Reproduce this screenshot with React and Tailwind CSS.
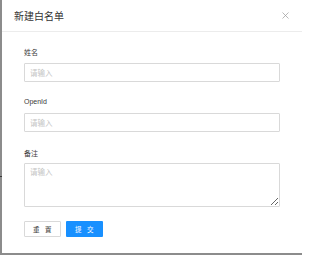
import React from "react";

export default function App() {
  const font = { fontFamily: '"Noto Sans CJK SC", "Noto Sans", "Liberation Sans", sans-serif' };
  return (
    <div className="w-[302px] h-[255px] bg-[#8c8c8c] relative overflow-hidden" style={font}>
      <div className="absolute left-0 top-[176px] w-[2px] h-[1px] bg-[#3a3a3a]" />
      <div className="ml-[2px] h-[253px] bg-white flex flex-col">
        <div className="h-[32px] border-b border-[#ececec] flex items-center justify-between pl-[12px] pr-[13px]">
          <span className="text-[10px] leading-none text-[#333333]">新建白名单</span>
          <svg width="7" height="7" viewBox="0 0 7 7" className="text-[#999999]">
            <path d="M0.5 0.5 L6.5 6.5 M6.5 0.5 L0.5 6.5" stroke="currentColor" strokeWidth="0.7" fill="none" />
          </svg>
        </div>
        <div className="flex flex-col px-[22px] pt-[15px]">
          <label className="h-[10px] text-[7px] leading-[10px] text-[#3a3a3a]">姓名</label>
          <input
            readOnly
            placeholder="请输入"
            className="mt-[6px] h-[19px] w-full border border-[#d9d9d9] rounded-[1px] px-[5px] text-[7.5px] placeholder:text-[#c4c4c4] outline-none"
          />
          <label className="mt-[15px] h-[10px] text-[7px] leading-[10px] text-[#3a3a3a]" style={{ fontFamily: '"Liberation Sans", "Noto Sans CJK SC", sans-serif' }}>OpenId</label>
          <input
            readOnly
            placeholder="请输入"
            className="mt-[6px] h-[19px] w-full border border-[#d9d9d9] rounded-[1px] px-[5px] text-[7.5px] placeholder:text-[#c4c4c4] outline-none"
          />
          <label className="mt-[16px] h-[10px] text-[7px] leading-[10px] text-[#3a3a3a]">备注</label>
          <textarea
            readOnly
            placeholder="请输入"
            className="mt-[5px] h-[44px] w-full border border-[#d9d9d9] rounded-[1px] px-[5px] py-[3px] text-[7.5px] leading-[10px] placeholder:text-[#c4c4c4] outline-none"
          />
          <div className="mt-[14px] flex gap-[5px]">
            <button className="w-[37px] h-[16px] border border-[#d9d9d9] rounded-[1px] bg-white text-[6.5px] leading-none text-[#333333] tracking-[5.5px] pl-[5px]">重置</button>
            <button className="w-[37px] h-[16px] rounded-[1px] bg-[#1890ff] text-[6.5px] leading-none text-white tracking-[5.5px] pl-[5px]">提交</button>
          </div>
        </div>
      </div>
    </div>
  );
}
